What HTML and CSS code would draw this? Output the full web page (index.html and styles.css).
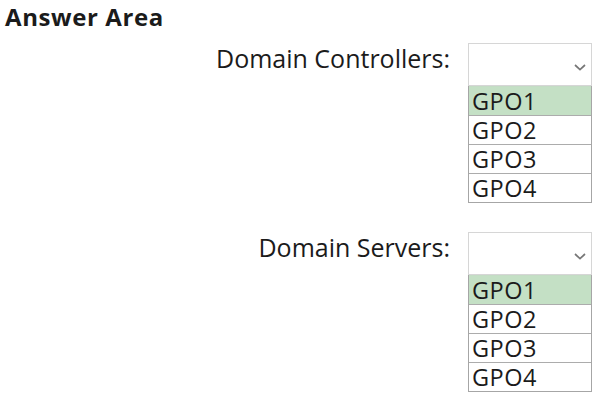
FILE: index.html
```html
<!DOCTYPE html>
<html>
<head>
<meta charset="utf-8">
<link rel="stylesheet" href="styles.css">
</head>
<body>
<div class="page">
  <h1 class="title">Answer Area</h1>
  <div class="group">
    <div class="label">Domain Controllers:</div>
    <div class="field">
      <div class="select"><svg class="chev" width="12" height="7" viewBox="0 0 12 7"><path d="M1 1 L6 5.6 L11 1" fill="none" stroke="#777777" stroke-width="1.7"/></svg></div>
      <ul class="options">
        <li class="opt sel">GPO1</li>
        <li class="opt">GPO2</li>
        <li class="opt">GPO3</li>
        <li class="opt">GPO4</li>
      </ul>
    </div>
  </div>
  <div class="group second">
    <div class="label">Domain Servers:</div>
    <div class="field">
      <div class="select"><svg class="chev" width="12" height="7" viewBox="0 0 12 7"><path d="M1 1 L6 5.6 L11 1" fill="none" stroke="#777777" stroke-width="1.7"/></svg></div>
      <ul class="options">
        <li class="opt sel">GPO1</li>
        <li class="opt">GPO2</li>
        <li class="opt">GPO3</li>
        <li class="opt">GPO4</li>
      </ul>
    </div>
  </div>
</div>
</body>
</html>
```
FILE: styles.css
```css
html, body {
  margin: 0;
  padding: 0;
  background: #ffffff;
}
body {
  font-family: "Open Sans", "Noto Sans", sans-serif;
  color: #1b1b1b;
}
.page {
  width: 598px;
  height: 395px;
  overflow: hidden;
}
.title {
  margin: 0;
  padding: 0 0 0 5px;
  font-size: 24px;
  font-weight: 700;
  line-height: 33px;
  letter-spacing: 0.6px;
}
.group {
  display: grid;
  grid-template-columns: 450px 124px;
  column-gap: 18px;
  margin-top: 10px;
}
.group.second {
  margin-top: 29px;
}
.label {
  text-align: right;
  font-size: 25px;
  line-height: 30px;
}
.field {
  display: flex;
  flex-direction: column;
}
.select {
  box-sizing: border-box;
  height: 43px;
  border: 1px solid #d6d6d6;
  display: flex;
  align-items: center;
  justify-content: flex-end;
  padding: 6px 5px 0 0;
}
.chev {
  display: block;
}
.options {
  list-style: none;
  margin: 0;
  padding: 0;
  border: 1px solid #a6a6a6;
  border-top: none;
}
.opt {
  box-sizing: border-box;
  height: 29px;
  line-height: 28px;
  font-size: 23.5px;
  letter-spacing: 0.5px;
  padding-left: 3px;
  border-top: 1px solid #acacac;
}
.opt:first-child {
  border-top: 1px solid #c4dcc5;
}
.opt.sel {
  background: #c4e0c5;
}
```
